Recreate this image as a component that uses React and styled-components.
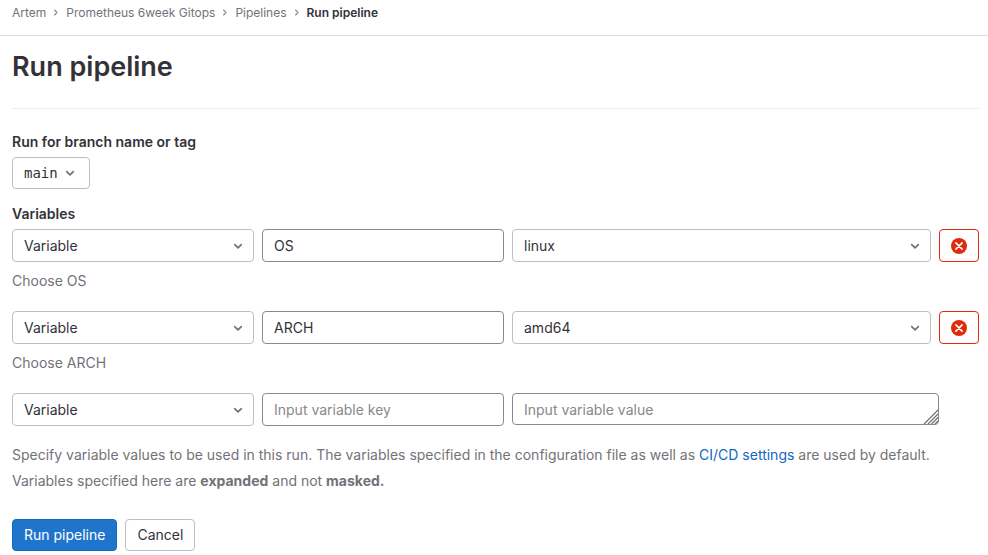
import React from 'react';
import styled, { createGlobalStyle } from 'styled-components';

const GlobalStyle = createGlobalStyle`
  *, *::before, *::after { box-sizing: border-box; }
  body {
    margin: 0;
    background: #fff;
    color: #333238;
    font-family: Inter, "Noto Sans", sans-serif;
    font-size: 14px;
    line-height: 20px;
  }
  button, input, select, textarea { font: inherit; }
`;

const TopBar = styled.nav`
  height: 36px;
  padding: 5px 12px 0;
  border-bottom: 1px solid #dcdcde;
`;

const Crumbs = styled.ol`
  display: flex;
  align-items: center;
  margin: 0;
  padding: 0;
  list-style: none;
  font-size: 12px;
  line-height: 16px;
`;

const Crumb = styled.li`
  display: flex;
  align-items: center;
`;

const CrumbLink = styled.a`
  color: ${(p) => (p.$current ? '#333238' : '#737278')};
  font-weight: ${(p) => (p.$current ? 600 : 400)};
  text-decoration: none;
`;

const CrumbArrow = styled.svg`
  width: 8px;
  height: 8px;
  margin: 0 6px;
  color: #89888d;
`;

const Content = styled.main`
  padding: 0 9px 0 12px;
`;

const Title = styled.h1`
  margin: 0;
  padding: 14px 0 25px;
  border-bottom: 1px solid #ececef;
  font-size: 27px;
  line-height: 33px;
  font-weight: 600;
`;

const Form = styled.form`
  padding-top: 23px;
`;

const Group = styled.div`
  display: flex;
  flex-direction: column;
  align-items: flex-start;
  margin-bottom: 15px;
`;

const FieldLabel = styled.label`
  margin-bottom: 5px;
  font-weight: 600;
`;

const Button = styled.button`
  display: inline-flex;
  align-items: center;
  justify-content: center;
  height: 32px;
  padding: 0 11px;
  border: 1px solid ${(p) => (p.$primary ? '#1068bf' : '#bfbfc3')};
  border-radius: 4px;
  background: ${(p) => (p.$primary ? '#1f75cb' : '#fff')};
  color: ${(p) => (p.$primary ? '#fff' : '#333238')};
`;

const RefButton = styled(Button)`
  gap: 4px;
  font-family: "DejaVu Sans Mono", "Liberation Mono", monospace;
`;

const Chevron = styled.svg`
  width: 16px;
  height: 16px;
  color: #737278;
`;

const Variables = styled.fieldset`
  min-width: 0;
  margin: 0;
  padding: 0;
  border: 0;
`;

const Legend = styled.legend`
  padding: 0 0 5px;
  font-weight: 600;
`;

const Row = styled.div`
  display: grid;
  grid-template-columns: 242fr 242fr 419fr 40px;
  gap: 8px;
`;

const SelectBox = styled.div`
  position: relative;
  display: flex;

  ${Chevron} {
    position: absolute;
    right: 8px;
    top: 9px;
    pointer-events: none;
  }
`;

const Select = styled.select`
  appearance: none;
  width: 100%;
  height: 33px;
  padding: 0 28px 0 11px;
  border: 1px solid #bfbfc3;
  border-radius: 4px;
  background: #fff;
  color: #333238;
`;

const Input = styled.input`
  width: 100%;
  min-width: 0;
  height: 33px;
  padding: 0 11px;
  border: 1px solid #89888d;
  border-radius: 4px;
  background: #fff;
  color: #333238;
  &::placeholder { color: #89888d; }
`;

const ValueBox = styled.div`
  position: relative;
  display: flex;
  grid-column: 3 / 5;
  align-self: start;
  margin-right: 40px;
`;

const ValueArea = styled.textarea`
  width: 100%;
  height: 32px;
  padding: 6px 11px;
  border: 1px solid #89888d;
  border-radius: 4px;
  color: #333238;
  line-height: 20px;
  resize: none;
  overflow: hidden;
  &::placeholder { color: #89888d; }
`;

const Grip = styled.svg`
  position: absolute;
  right: 0;
  bottom: 0;
  width: 16px;
  height: 16px;
  pointer-events: none;
`;

const RemoveButton = styled.button`
  display: flex;
  align-items: center;
  justify-content: center;
  height: 33px;
  padding: 0;
  border: 1px solid #dd2b0e;
  border-radius: 4px;
  background: #fff;
  color: #dd2b0e;
`;

const Hint = styled.p`
  margin: 9px 0 20px;
  color: #737278;
`;

const Help = styled.p`
  margin: 16px 0 25px;
  color: #737278;
  line-height: 26px;
`;

const Link = styled.a`
  color: #1068bf;
  text-decoration: none;
`;

const Actions = styled.div`
  display: flex;
  gap: 8px;
`;

const ChevronDown = () => (
  <Chevron viewBox="0 0 16 16" aria-hidden="true">
    <path d="M4.7 6.7 8 9.9l3.3-3.2" fill="none" stroke="currentColor" strokeWidth="1.7" strokeLinecap="round" strokeLinejoin="round" />
  </Chevron>
);

const TypeSelect = () => (
  <SelectBox>
    <Select aria-label="Variable type">
      <option>Variable</option>
      <option>File</option>
    </Select>
    <ChevronDown />
  </SelectBox>
);

const crumbs = ['Artem', 'Prometheus 6week Gitops', 'Pipelines', 'Run pipeline'];

const variables = [
  { key: 'OS', values: ['linux', 'darwin', 'windows'], hint: 'Choose OS' },
  { key: 'ARCH', values: ['amd64', 'arm64'], hint: 'Choose ARCH' },
];

export default function App() {
  return (
    <>
      <GlobalStyle />
      <TopBar aria-label="Breadcrumb">
        <Crumbs>
          {crumbs.map((name, i) => (
            <Crumb key={name}>
              {i > 0 && (
                <CrumbArrow viewBox="0 0 8 8" aria-hidden="true">
                  <path d="M2.6 1 5 3.5 2.6 6" fill="none" stroke="currentColor" strokeWidth="1.1" strokeLinecap="round" strokeLinejoin="round" />
                </CrumbArrow>
              )}
              <CrumbLink href="#" $current={i === crumbs.length - 1}>{name}</CrumbLink>
            </Crumb>
          ))}
        </Crumbs>
      </TopBar>
      <Content>
        <Title>Run pipeline</Title>
        <Form onSubmit={(e) => e.preventDefault()}>
          <Group>
            <FieldLabel htmlFor="ref">Run for branch name or tag</FieldLabel>
            <RefButton id="ref" type="button" aria-haspopup="listbox">
              main
              <ChevronDown />
            </RefButton>
          </Group>
          <Variables>
            <Legend>Variables</Legend>
            {variables.map((v) => (
              <React.Fragment key={v.key}>
                <Row>
                  <TypeSelect />
                  <Input aria-label="Variable key" defaultValue={v.key} />
                  <SelectBox>
                    <Select aria-label="Variable value">
                      {v.values.map((o) => <option key={o}>{o}</option>)}
                    </Select>
                    <ChevronDown />
                  </SelectBox>
                  <RemoveButton type="button" aria-label="Remove variable">
                    <svg width="16" height="16" viewBox="0 0 16 16" aria-hidden="true">
                      <circle cx="8" cy="8" r="8" fill="currentColor" />
                      <path d="m4.9 4.9 6.2 6.2m0-6.2-6.2 6.2" stroke="#fff" strokeWidth="1.6" strokeLinecap="round" />
                    </svg>
                  </RemoveButton>
                </Row>
                <Hint>{v.hint}</Hint>
              </React.Fragment>
            ))}
            <Row>
              <TypeSelect />
              <Input aria-label="Variable key" placeholder="Input variable key" />
              <ValueBox>
                <ValueArea aria-label="Variable value" placeholder="Input variable value" rows={1} />
                <Grip viewBox="0 0 16 16" aria-hidden="true">
                  <path d="M1 15 15 1M5 15 15 5M8.500 15 15 8.500M12 15l3-3" stroke="#737278" strokeWidth="1.200" />
                </Grip>
              </ValueBox>
            </Row>
          </Variables>
          <Help>
            Specify variable values to be used in this run. The variables specified in the configuration file as well as{' '}
            <Link href="#">CI/CD settings</Link> are used by default.
            <br />
            Variables specified here are <strong>expanded</strong> and not <strong>masked.</strong>
          </Help>
          <Actions>
            <Button type="submit" $primary>Run pipeline</Button>
            <Button type="button">Cancel</Button>
          </Actions>
        </Form>
      </Content>
    </>
  );
}
